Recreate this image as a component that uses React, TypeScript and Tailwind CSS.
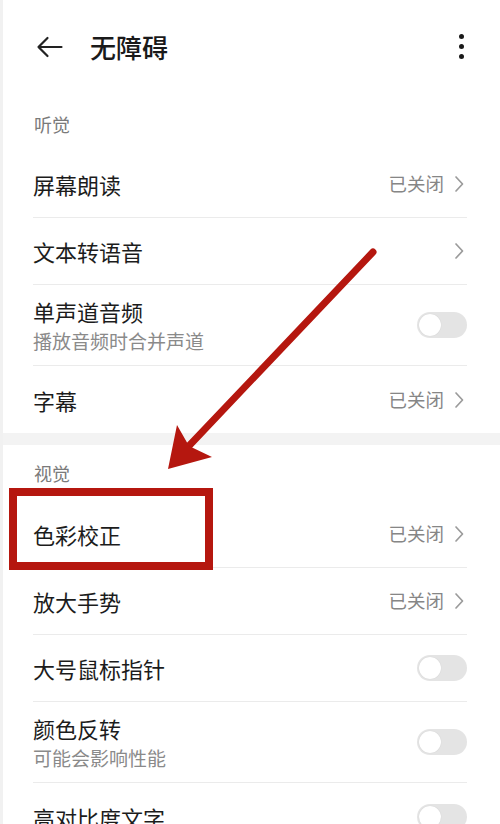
import React from "react";

const FONT = { fontFamily: '"Noto Sans CJK SC", "Noto Sans", sans-serif' };

type Item = { title: string; sub?: string; value?: string; kind: "link" | "toggle" };

const HEARING: Item[] = [
  { title: "屏幕朗读", value: "已关闭", kind: "link" },
  { title: "文本转语音", kind: "link" },
  { title: "单声道音频", sub: "播放音频时合并声道", kind: "toggle" },
  { title: "字幕", value: "已关闭", kind: "link" },
];

const VISION: Item[] = [
  { title: "色彩校正", value: "已关闭", kind: "link" },
  { title: "放大手势", value: "已关闭", kind: "link" },
  { title: "大号鼠标指针", kind: "toggle" },
  { title: "颜色反转", sub: "可能会影响性能", kind: "toggle" },
  { title: "高对比度文字", kind: "toggle" },
];

function Chevron() {
  return (
    <svg width="10" height="18" viewBox="0 0 10 18" className="ml-[10px]">
      <path d="M2 2 L8.5 9 L2 16" fill="none" stroke="#9b9b9b" strokeWidth="1.7" strokeLinecap="round" strokeLinejoin="round" />
    </svg>
  );
}

function Toggle() {
  return (
    <div className="w-[50px] h-[26px] rounded-full bg-[#e4e4e4] flex items-center">
      <div className="w-[22px] h-[22px] ml-[2px] rounded-full bg-white shadow-[0_0_1px_rgba(0,0,0,0.15)]" />
    </div>
  );
}

function Row({ item, last }: { item: Item; last: boolean }) {
  return (
    <div className="pl-[30px] pr-[33px]">
      <div className={`flex items-center justify-between ${item.sub ? "h-[81px]" : "h-[67px]"} ${last ? "" : "border-b border-[#ebebeb]"}`}>
        <div className="flex flex-col">
          <div className="text-[22px] leading-[28px] text-[#1c1c1c]">{item.title}</div>
          {item.sub && <div className="text-[19px] leading-[26px] mt-[3px] text-[#8a8a8a]">{item.sub}</div>}
        </div>
        {item.kind === "link" ? (
          <div className="flex items-center pr-[3px]">
            {item.value && <span className="text-[18.5px] text-[#868686]">{item.value}</span>}
            <Chevron />
          </div>
        ) : (
          <Toggle />
        )}
      </div>
    </div>
  );
}

export default function App() {
  return (
    <div className="relative w-[500px] h-[824px] overflow-hidden bg-white border-l-[3px] border-[#f1f1f1]" style={FONT}>
      {/* top bar */}
      <div className="h-[97px] flex items-center pl-[33px] pr-[36px] pb-[4px]">
        <svg width="27" height="22" viewBox="0 0 27 22">
          <path d="M25.5 11 H2.5 M11.5 2 L2.5 11 L11.5 20" fill="none" stroke="#222" strokeWidth="2.2" strokeLinecap="round" strokeLinejoin="round" />
        </svg>
        <div className="ml-[27px] text-[26px] font-medium text-[#1a1a1a]">无障碍</div>
        <div className="ml-auto flex flex-col gap-[5px] items-center">
          <span className="w-[5px] h-[5px] rounded-full bg-[#1a1a1a]" />
          <span className="w-[5px] h-[5px] rounded-full bg-[#1a1a1a]" />
          <span className="w-[5px] h-[5px] rounded-full bg-[#1a1a1a]" />
        </div>
      </div>

      <div className="h-[54px] flex items-center pl-[31px] text-[18px] text-[#7a7a7a]">听觉</div>
      {HEARING.map((it, i) => (
        <Row key={it.title} item={it} last={i === HEARING.length - 1} />
      ))}

      <div className="h-[12px] bg-[#f3f3f3]" />

      <div className="h-[56px] flex items-center pl-[31px] text-[18px] text-[#7a7a7a]">视觉</div>
      {VISION.map((it, i) => (
        <Row key={it.title} item={it} last={i === VISION.length - 1} />
      ))}

      {/* annotation: red box */}
      <div className="absolute left-[6px] top-[488px] w-[204px] h-[82px] border-[8px] border-[#b5170f] pointer-events-none" />

      {/* annotation: red arrow */}
      <svg className="absolute left-[-3px] top-0 pointer-events-none" width="500" height="824" viewBox="0 0 500 824">
        <line x1="373" y1="252" x2="186" y2="449" stroke="#b5170f" strokeWidth="7" strokeLinecap="round" />
        <polygon points="168,469 177,425 189,446 212,457" fill="#b5170f" />
      </svg>
    </div>
  );
}
